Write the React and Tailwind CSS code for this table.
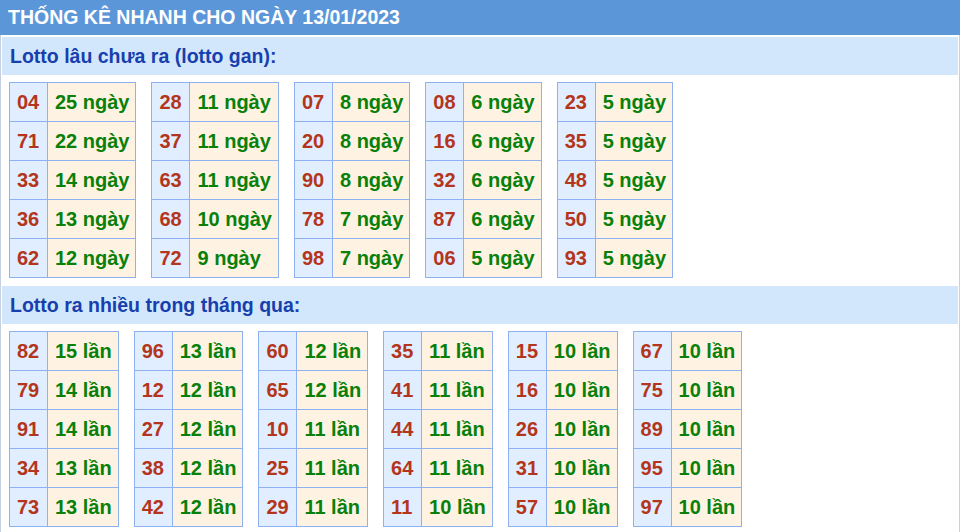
const ganTables = [
  [["04", "25 ngày"], ["71", "22 ngày"], ["33", "14 ngày"], ["36", "13 ngày"], ["62", "12 ngày"]],
  [["28", "11 ngày"], ["37", "11 ngày"], ["63", "11 ngày"], ["68", "10 ngày"], ["72", "9 ngày"]],
  [["07", "8 ngày"], ["20", "8 ngày"], ["90", "8 ngày"], ["78", "7 ngày"], ["98", "7 ngày"]],
  [["08", "6 ngày"], ["16", "6 ngày"], ["32", "6 ngày"], ["87", "6 ngày"], ["06", "5 ngày"]],
  [["23", "5 ngày"], ["35", "5 ngày"], ["48", "5 ngày"], ["50", "5 ngày"], ["93", "5 ngày"]],
];

const hotTables = [
  [["82", "15 lần"], ["79", "14 lần"], ["91", "14 lần"], ["34", "13 lần"], ["73", "13 lần"]],
  [["96", "13 lần"], ["12", "12 lần"], ["27", "12 lần"], ["38", "12 lần"], ["42", "12 lần"]],
  [["60", "12 lần"], ["65", "12 lần"], ["10", "11 lần"], ["25", "11 lần"], ["29", "11 lần"]],
  [["35", "11 lần"], ["41", "11 lần"], ["44", "11 lần"], ["64", "11 lần"], ["11", "10 lần"]],
  [["15", "10 lần"], ["16", "10 lần"], ["26", "10 lần"], ["31", "10 lần"], ["57", "10 lần"]],
  [["67", "10 lần"], ["75", "10 lần"], ["89", "10 lần"], ["95", "10 lần"], ["97", "10 lần"]],
];

const StatTable = ({ rows }) => (
  <table className="border-collapse">
    <tbody>
      {rows.map(([num, val]) => (
        <tr key={num}>
          <td className="w-[38px] border border-[#8fb1f2] bg-[#e1eeff] px-[7px] py-[7px] text-left leading-[24px] text-[#b3361c]">
            {num}
          </td>
          <td className="border border-[#8fb1f2] bg-[#fef3e2] pl-[7px] pr-[6px] py-[7px] text-left leading-[24px] text-[#08800a]">
            {val}
          </td>
        </tr>
      ))}
    </tbody>
  </table>
);

const Section = ({ title, tables }) => (
  <section>
    <h2 className="h-[38px] bg-[#d3e7fc] pl-[8px] text-[19.5px] font-bold leading-[38px] text-[#173fae]">
      {title}
    </h2>
    <div className="flex gap-[15px] px-[7px] pt-[7px] pb-[8px] text-[20px] font-bold">
      {tables.map((rows, i) => (
        <StatTable key={i} rows={rows} />
      ))}
    </div>
  </section>
);

const App = () => {
  return (
    <div className="w-[960px] bg-white font-['Liberation_Sans',Arial,sans-serif]">
      <header className="h-[35px] bg-[#5b97d8] pl-[8px] text-[19.5px] font-bold leading-[35px] text-white">
        THỐNG KÊ NHANH CHO NGÀY 13/01/2023
      </header>
      <div className="border-x border-[#c6d0de] px-[1px] pt-[2px]">
        <Section title="Lotto lâu chưa ra (lotto gan):" tables={ganTables} />
        <Section title="Lotto ra nhiều trong tháng qua:" tables={hotTables} />
      </div>
    </div>
  );
};

export default App;
